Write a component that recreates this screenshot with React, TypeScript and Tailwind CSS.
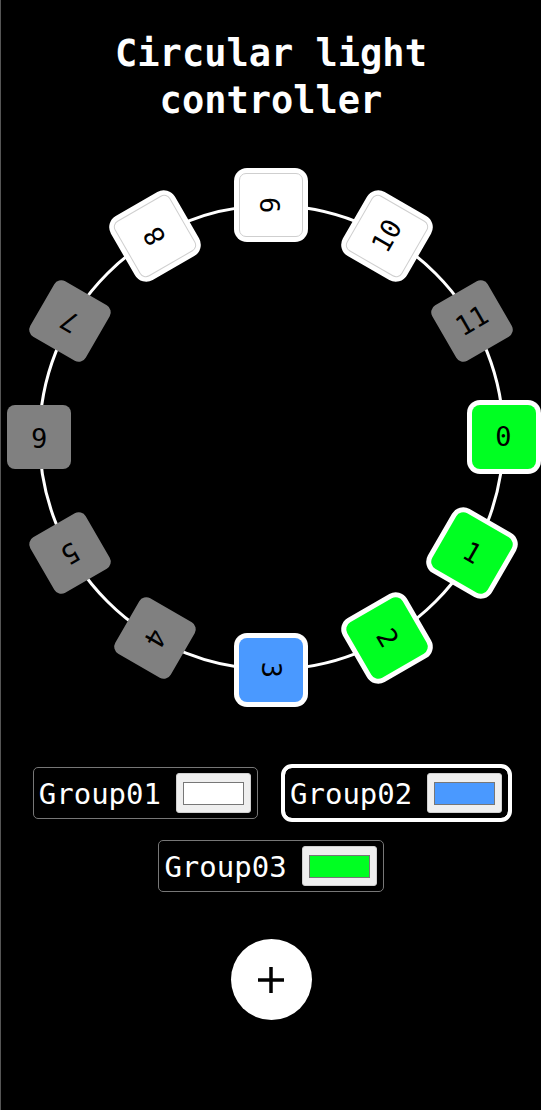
import React from "react";

const mono = { fontFamily: '"DejaVu Sans Mono", "Liberation Mono", monospace' };

interface iLight {
  id: number;
  color: string;
  active: boolean;
  white?: boolean;
}

const lights: iLight[] = [
  { id: 0, color: "bg-[#00ff22]", active: true },
  { id: 1, color: "bg-[#00ff22]", active: true },
  { id: 2, color: "bg-[#00ff22]", active: true },
  { id: 3, color: "bg-[#4a99ff]", active: true },
  { id: 4, color: "bg-[#808080]", active: false },
  { id: 5, color: "bg-[#808080]", active: false },
  { id: 6, color: "bg-[#808080]", active: false },
  { id: 7, color: "bg-[#808080]", active: false },
  { id: 8, color: "bg-white", active: true, white: true },
  { id: 9, color: "bg-white", active: true, white: true },
  { id: 10, color: "bg-white", active: true, white: true },
  { id: 11, color: "bg-[#808080]", active: false },
];

const R = 232.5;
const C = 232;

const Light = ({ id, color, active, white }: iLight) => {
  const a = (id * 30 * Math.PI) / 180;
  const x = C + R * Math.cos(a);
  const y = C + R * Math.sin(a);
  return (
    <div
      className={`absolute w-[64px] h-[64px] -ml-[32px] -mt-[32px] rounded-[8px] flex items-center justify-center text-[27px] text-black ${color} ${
        active ? "shadow-[0_0_0_5px_white]" : ""
      }`}
      style={{ left: x, top: y, transform: `rotate(${id * 30}deg)`, ...mono }}
    >
      {white && (
        <div className="absolute inset-0 rounded-[7px] border border-[#cfcfcf]" />
      )}
      <span className="relative">{id}</span>
    </div>
  );
};

interface iGroup {
  name: string;
  swatch: string;
  selected?: boolean;
}

const Group = ({ name, swatch, selected }: iGroup) => {
  return (
    <div
      className={`flex items-center h-[52px] pl-[5px] pr-[6px] rounded-[5px] border border-[#777] ${
        selected ? "outline-[4px] outline-white outline-offset-[-1px] border-white rounded-[8px]" : ""
      }`}
      style={{ outlineStyle: selected ? "solid" : undefined }}
    >
      <span className="text-[29px] text-white leading-none pt-[3px]" style={mono}>
        {name}
      </span>
      <div className="ml-[15px] w-[75px] h-[40px] rounded-[3px] bg-[#efefef] border border-[#d0d0d0] flex items-center justify-center">
        <div className={`w-[61px] h-[23px] border border-[#777] ${swatch}`} />
      </div>
    </div>
  );
};

export default function App() {
  return (
    <div className="min-h-[1110px] w-full bg-black border-l border-[#555] flex flex-col items-center">
      <h1
        className="mt-[30px] text-[37px] leading-[47px] font-bold text-white text-center"
        style={mono}
      >
        Circular light
        <br />
        controller
      </h1>
      <div className="relative mt-[81px] w-[464px] h-[464px]">
        <div className="absolute -inset-[1.5px] rounded-full border-[3px] border-white" />
        {lights.map((l) => (
          <Light key={l.id} {...l} />
        ))}
      </div>
      <div className="mt-[98px] w-[500px] flex flex-wrap justify-center gap-x-[26px] gap-y-[21px]">
        <Group name="Group01" swatch="bg-white" />
        <Group name="Group02" swatch="bg-[#4a99ff]" selected />
        <Group name="Group03" swatch="bg-[#00ff22]" />
      </div>
      <button className="mt-[47px] w-[81px] h-[81px] rounded-full bg-white flex items-center justify-center">
        <svg width="28" height="28" viewBox="0 0 28 28">
          <path d="M1 14H27M14 1V27" stroke="black" strokeWidth="3.5" />
        </svg>
      </button>
    </div>
  );
}
